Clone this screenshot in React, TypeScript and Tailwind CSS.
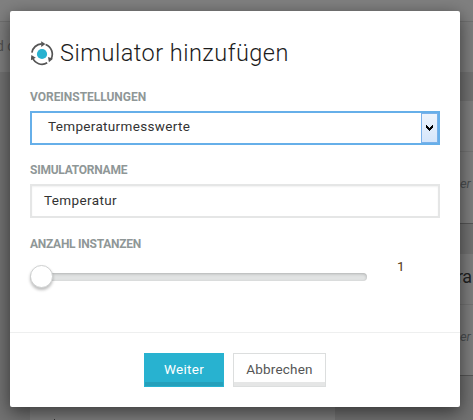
import React from "react";

function SimulatorIcon() {
  return (
    <svg width="24" height="25" viewBox="0 0 24 25" className="block shrink-0">
      <circle cx="12" cy="13" r="5.1" fill="#28b2d0" />
      <g fill="none" stroke="#555" strokeWidth="1.7">
        <path d="M1.9 11.6A10.2 10.2 0 0 1 11.6 2.9" />
        <path d="M15.6 3.5A10.2 10.2 0 0 1 20.9 18.2" />
        <path d="M17.2 21.8A10.2 10.2 0 0 1 2.5 16.8" />
      </g>
      <g fill="#555">
        <path d="M11.2 0.2L15.4 2.9L11.2 5.9Z" />
        <path d="M18 15.9L23 17.7L18.9 21.2Z" />
        <path d="M0.9 19.3L1.3 14L5.8 16.7Z" />
      </g>
    </svg>
  );
}

function Label({ children, className }: { children: React.ReactNode; className: string }) {
  return (
    <div className={`h-[14px] whitespace-nowrap text-[12px] font-bold leading-[14px] text-[#8f9797] ${className}`}>
      {children}
    </div>
  );
}

function PageCard({ title, first }: { title: string; first?: boolean }) {
  return (
    <div className={`flex shrink-0 flex-col border-b border-[#565656] bg-[#7e7e7e] ${first ? "h-[123px]" : "h-[122px]"}`}>
      <div className="h-[51px] shrink-0 border-b border-[#737373] pl-[4px] pt-[13px] text-[18px] leading-[20px] tracking-[-0.4px] text-[#222]">
        {title}
      </div>
      <div className="pl-[7px] pt-[22px] text-[13px] italic leading-[20px] tracking-[-0.1px] text-[#4c5052]">er</div>
    </div>
  );
}

function Page() {
  return (
    <div className="flex h-full flex-col">
      <div className="h-[22px] border-b border-[#717171] bg-[#808080]" />
      <div className="h-[50px] whitespace-nowrap bg-[#7e7e7e] pt-[14px] text-[14px] leading-[20px] text-[#515151]">
        <span className="ml-[-4px]">d c</span>
      </div>
      <div className="flex min-h-0 flex-1 bg-[#727272]">
        <div className="w-[30px]" />
        <div className="flex w-[305px] items-end bg-[#7e7e7e] pl-6">
          <div className="h-px w-px bg-[#333]" />
        </div>
        <div className="flex-1" />
        <div className="flex w-[20px] flex-col gap-[30px] pt-[29px]">
          <PageCard title="" first />
          <PageCard title="ra" />
        </div>
      </div>
    </div>
  );
}

function Dialog() {
  return (
    <div className="absolute left-[10px] top-[11px] flex h-[396px] w-[450px] flex-col rounded-[2px] bg-white shadow-[0_5px_18px_rgba(0,0,0,0.55)]">
      <div className="flex h-[321px] flex-col px-5 pt-[30px]">
        <div className="flex h-[28px]">
          <SimulatorIcon />
          <h1 className="ml-[6px] mt-[-2px] whitespace-nowrap text-[23.5px] font-light leading-[28px] tracking-[0.48px] text-[#1c1c1c]">
            Simulator hinzufügen
          </h1>
        </div>

        <Label className="mt-[21px] tracking-[-0.03px]">VOREINSTELLUNGEN</Label>
        <div className="mt-[7px] flex h-[34px] shrink-0 border-2 border-[#66afe9] bg-white">
          <div className="flex-1 pl-4 pt-[3px] text-[13.5px] leading-[20px] tracking-[0.33px] text-[#333]">Temperaturmesswerte</div>
          <div className="flex w-[17px] items-center justify-center border border-[#7ab1ea] bg-gradient-to-b from-[#edf4fc] to-[#d5e6fb]">
            <svg width="7" height="6" viewBox="0 0 7 6" shapeRendering="crispEdges">
              <path d="M0 0H1V1H2V2H3V3H4V2H5V1H6V0H7V3H6V4H5V5H4V6H3V5H2V4H1V3H0Z" fill="#000" />
            </svg>
          </div>
        </div>

        <Label className="mt-[18px] tracking-[-0.25px]">SIMULATORNAME</Label>
        <div className="mt-[7px] h-[34px] shrink-0 border-2 border-[#e5e6e6] bg-white pl-3 pt-[4px] text-[13.5px] leading-[20px] tracking-[0.37px] text-[#333] shadow-[inset_0_1px_2px_rgba(0,0,0,0.06)]">
          Temperatur
        </div>

        <Label className="mt-[19px] tracking-[-0.26px]">ANZAHL INSTANZEN</Label>
        <div className="mt-[4px] flex h-[40px]">
          <div className="relative mt-[18px] h-[8px] w-[337px] rounded-[4px] bg-[#e1e3e3] shadow-[inset_0_1px_3px_rgba(0,0,0,0.22)]">
            <div className="absolute left-0 top-[-8px] size-[23px] rounded-full border border-[#cfd1d1] bg-white shadow-[0_2px_3px_rgba(0,0,0,0.25)]" />
          </div>
          <div className="ml-[30px] mt-[1px] text-[13.5px] leading-[20px] text-[#54390f]">1</div>
        </div>
      </div>

      <div className="flex flex-1 justify-center gap-[9px] border-t border-[#eeefef] pt-5 text-[13.5px] leading-[20px]">
        <button className="flex h-[34px] w-[80px] justify-center border border-[#28b2d0] bg-[#28b2d0] pt-[5px] tracking-[0.3px] text-white shadow-[inset_0_-4px_0_#25a0bb]">
          Weiter
        </button>
        <button className="flex h-[34px] w-[93px] justify-center border border-[#dcdede] bg-white pt-[5px] tracking-[0.2px] text-[#555] shadow-[inset_0_-4px_0_#e5e6e6]">
          Abbrechen
        </button>
      </div>
    </div>
  );
}

export default function App() {
  return (
    <main className="relative h-[420px] w-[473px] overflow-hidden font-['Roboto','Liberation_Sans',sans-serif]">
      <Page />
      <Dialog />
    </main>
  );
}
